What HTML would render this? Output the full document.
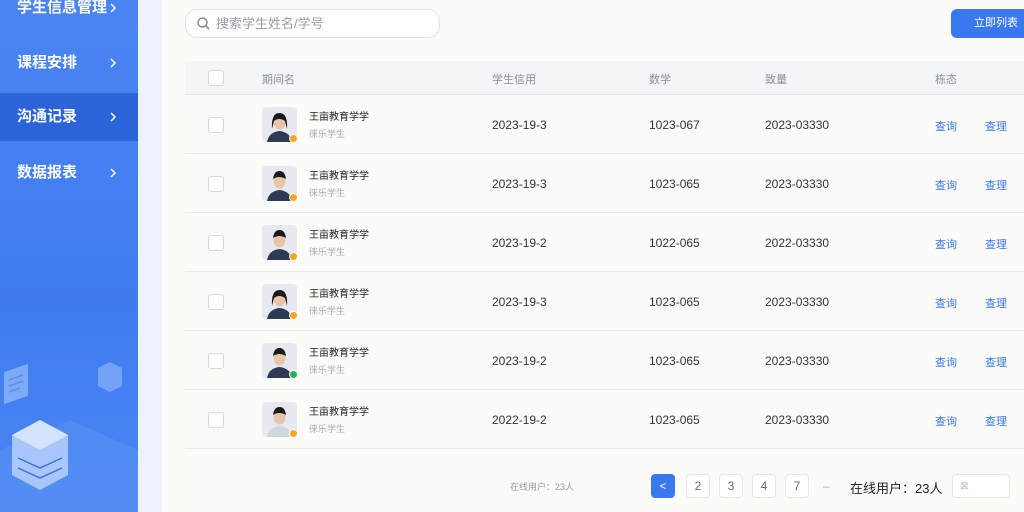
<!DOCTYPE html>
<html><head><meta charset="utf-8"><style>
*{margin:0;padding:0;box-sizing:border-box}
body{width:1024px;height:512px;overflow:hidden;background:#fbfbf8;font-family:"Liberation Sans","Noto Sans CJK SC",sans-serif;position:relative}
.sb{position:absolute;left:0;top:0;width:138px;height:512px;background:linear-gradient(180deg,#4a84f2 0%,#3f7cf0 60%,#4a86f3 100%)}
.strip{position:absolute;left:138px;top:0;width:24px;height:512px;background:#eef2fa}
.mi{position:absolute;left:0;width:138px;height:48px;color:#fff;font-size:15px;font-weight:bold;padding-left:17px;line-height:48px}
.mi svg{position:absolute;left:109px;top:19px}
.act{background:#2b63d9}
.search{position:absolute;left:185px;top:9px;width:255px;height:29px;border:1px solid #dde1e6;border-radius:12px;background:#fff;font-size:13px;color:#9aa0a8;line-height:27px;padding-left:30px}
.btn{position:absolute;left:951px;top:9px;width:90px;height:29px;border-radius:6px;background:#3a78f0;color:#fff;font-size:11px;line-height:29px;padding-left:23px}
.th{position:absolute;left:185px;top:61px;width:839px;height:34px;background:#f3f5f8;border-bottom:1px solid #e3e6ea;font-size:11px;color:#8a9099}
.th div,.row div.c{position:absolute}
.row{position:absolute;left:185px;width:839px;height:59px;border-bottom:1px solid #e6e8ec;font-size:12px;color:#333}
.cb{position:absolute;left:23px;width:16px;height:16px;border:1px solid #d4d8de;border-radius:3px;background:#fff}
.av{position:absolute;left:77px;top:12px;width:35px;height:35px;border-radius:4px;background:#e6eaf0;overflow:hidden}
.dot{position:absolute;left:104px;top:39px;width:9px;height:9px;border-radius:50%;background:#f5a623;border:1px solid #fff}
.nm{position:absolute;left:124px;top:13px;font-size:10px;color:#222}
.sub{position:absolute;left:124px;top:32px;font-size:9px;color:#aaa}
.lk{color:#3a78f0;font-size:11px}
.pg{position:absolute;top:474px;width:24px;height:24px;border:1px solid #e3e6ea;border-radius:4px;background:#fff;font-size:12px;color:#666;text-align:center;line-height:22px}
</style></head><body>
<div class="sb">
<div class="mi" style="top:-16px">学生信息管理<svg width="8" height="10"><path d="M2 1L6 5L2 9" stroke="#fff" stroke-width="1.5" fill="none"/></svg></div>
<div class="mi" style="top:39px">课程安排<svg width="8" height="10"><path d="M2 1L6 5L2 9" stroke="#fff" stroke-width="1.5" fill="none"/></svg></div>
<div class="mi act" style="top:93px">沟通记录<svg width="8" height="10"><path d="M2 1L6 5L2 9" stroke="#fff" stroke-width="1.5" fill="none"/></svg></div>
<div class="mi" style="top:149px">数据报表<svg width="8" height="10"><path d="M2 1L6 5L2 9" stroke="#fff" stroke-width="1.5" fill="none"/></svg></div>
<svg style="position:absolute;left:0;top:360px" width="138" height="152">
<path d="M0 90 L70 60 L138 90 L138 152 L0 152Z" fill="#5b93f5" opacity=".5"/>
<path d="M4 12 L28 4 L28 36 L4 44Z" fill="#8cb4f8" opacity=".8"/>
<path d="M9 20 L23 15 M9 26 L23 21 M9 32 L20 28" stroke="#5b8ff0" stroke-width="1.5"/>
<path d="M110 2 L122 8 L122 26 L110 32 L98 26 L98 8Z" fill="#7faaf7" opacity=".8"/>
<path d="M12 75 L40 60 L68 75 L68 115 L40 130 L12 115Z" fill="#a9c6fb"/>
<path d="M12 75 L40 60 L68 75 L40 90Z" fill="#d5e3fd"/>
<path d="M18 98 L40 108 L62 98 M18 108 L40 118 L62 108" stroke="#3a70e0" stroke-width="1.5" fill="none"/>
</svg>
</div>
<div class="strip"></div>
<div class="search"><svg style="position:absolute;left:11px;top:7px" width="13" height="13"><circle cx="5.5" cy="5.5" r="4.5" stroke="#777" stroke-width="1.3" fill="none"/><path d="M9 9L12 12" stroke="#777" stroke-width="1.3"/></svg>搜索学生姓名/学号</div>
<div class="btn">立即列表</div>
<div class="th">
<div class="cb" style="top:9px"></div>
<div style="left:77px;top:10px">期间名</div>
<div style="left:307px;top:10px">学生信用</div>
<div style="left:464px;top:10px">数学</div>
<div style="left:580px;top:10px">致量</div>
<div style="left:750px;top:10px">栋态</div>
</div>
<div id="rows"></div>
<script>
var d=[["2023-19-3","1023-067","2023-03330","#f5a623"],["2023-19-3","1023-065","2023-03330","#f5a623"],["2023-19-2","1022-065","2022-03330","#f5a623"],["2023-19-3","1023-065","2023-03330","#f5a623"],["2023-19-2","1023-065","2023-03330","#27ae60"],["2022-19-2","1023-065","2023-03330","#f5a623"]];
var h="";d.forEach(function(r,i){var t=95+i*59;var f=(i==0||i==3);
h+='<div class="row" style="top:'+t+'px"><div class="cb" style="top:22px"></div><div class="av"><svg width="35" height="35"><path d="M5 35 Q7 25 17.5 24 Q28 25 30 35Z" fill="'+(i==5?'#cfd6df':'#2d3a55')+'"/><ellipse cx="17.5" cy="15" rx="6" ry="7.5" fill="#e8c4a8"/><path d="'+(f?'M10 22 Q9 6 17.5 6 Q26 6 25 22 L23 14 Q17 10 12 14Z':'M11 13 Q12 5 17.5 5 Q23 5 24 13 Q17 9 11 13Z')+'" fill="#1a1a1a"/></svg></div><div class="dot" style="background:'+r[3]+'"></div><div class="nm">王亩教育学学</div><div class="sub">徕乐学生</div>'+
'<div class="c" style="left:307px;top:23px">'+r[0]+'</div><div class="c" style="left:464px;top:23px">'+r[1]+'</div><div class="c" style="left:580px;top:23px">'+r[2]+'</div><div class="c lk" style="left:750px;top:23px">查询</div><div class="c lk" style="left:800px;top:23px">查理</div></div>';});
document.getElementById("rows").innerHTML=h;
</script>
<div style="position:absolute;left:510px;top:480px;font-size:9px;color:#999">在线用户：23人</div>
<div class="pg" style="left:651px;background:#3a78f0;border-color:#3a78f0;color:#fff">&lt;</div>
<div class="pg" style="left:686px">2</div>
<div class="pg" style="left:719px">3</div>
<div class="pg" style="left:752px">4</div>
<div class="pg" style="left:785px">7</div>
<div style="position:absolute;left:823px;top:479px;font-size:12px;color:#aaa">–</div>
<div style="position:absolute;left:850px;top:478px;font-size:13px;color:#222">在线用户：23人</div>
<div class="pg" style="left:952px;width:58px;text-align:left;padding-left:8px;font-size:9px;color:#9ab">⛝</div>
</body></html>
